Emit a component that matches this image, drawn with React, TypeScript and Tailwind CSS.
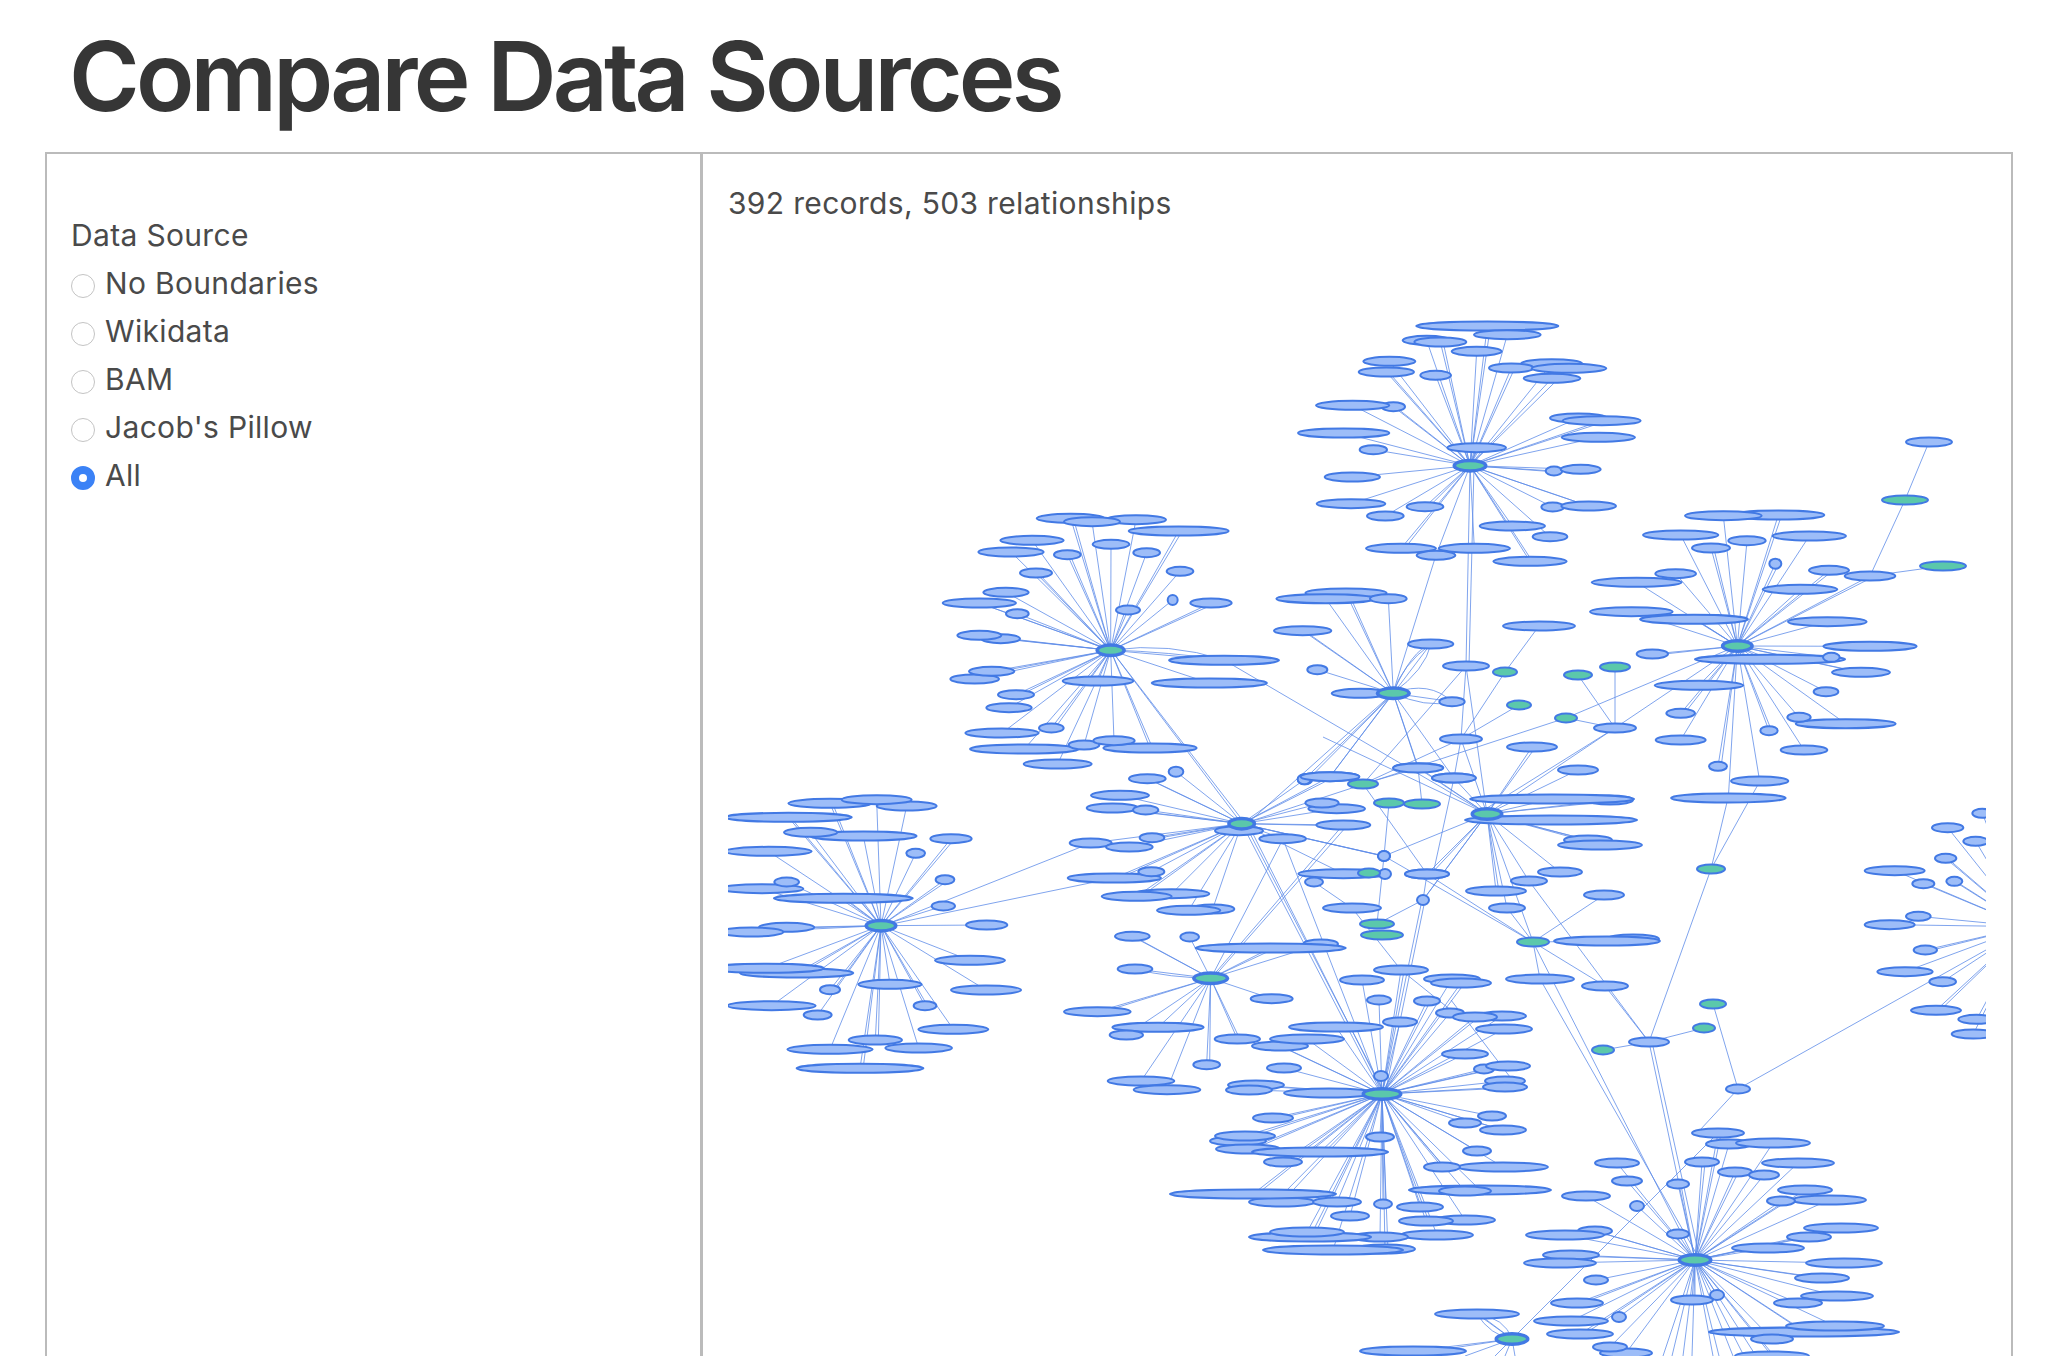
type Node = [number, number, number, number?];
type Cluster = { hub: Node; nodes: Node[] };
type Edge = number[];

const fontClass = "font-['Inter','Noto_Sans',sans-serif]";
const options = ["No Boundaries", "Wikidata", "BAM", "Jacob's Pillow", "All"];

// coordinates read at 3x from a crop, origin is the crop's corner
function crop(ox: number, oy: number, hub: Node, nodes: Node[]): Cluster {
  const map = ([x, y, w, g]: Node): Node => [ox + x / 3, oy + y / 3, w / 3, g];
  return { hub: map(hub), nodes: nodes.map(map) };
}

const clusters: Cluster[] = [
  crop(1250, 290, [660, 527, 45, 1], [
    [712, 108, 213], [772, 134, 100], [530, 151, 72], [571, 156, 78], [680, 184, 75], [418, 214, 78],
    [409, 246, 83], [557, 256, 46], [905, 221, 92], [784, 234, 67], [957, 235, 112], [906, 265, 85],
    [430, 350, 35], [308, 346, 110], [985, 384, 85], [1055, 392, 117], [281, 429, 137], [1045, 442, 110],
    [680, 473, 88], [370, 479, 41], [307, 561, 83], [912, 543, 25], [992, 538, 60], [303, 641, 103],
    [525, 650, 55], [406, 678, 55], [908, 651, 34], [1016, 648, 82], [787, 708, 98], [900, 740, 52],
    [453, 775, 105], [673, 775, 107], [558, 796, 58], [840, 814, 110],
  ]),
  crop(930, 490, [542, 481, 38, 1], [
    [422, 85, 102], [618, 89, 90], [486, 95, 84], [746, 123, 150], [306, 151, 95], [243, 186, 98],
    [412, 194, 40], [543, 163, 55], [650, 188, 40], [318, 249, 48], [750, 244, 40], [228, 307, 68],
    [148, 339, 110], [262, 371, 34], [728, 330, 15], [843, 339, 62], [594, 360, 36], [212, 446, 58],
    [148, 436, 66], [882, 511, 165], [134, 567, 73], [185, 544, 68], [504, 573, 106], [838, 579, 173],
    [258, 614, 54], [237, 653, 68], [216, 729, 110], [364, 714, 37], [283, 777, 163], [462, 765, 46],
    [660, 774, 140], [552, 752, 62], [383, 822, 102],
  ]),
  crop(730, 780, [453, 437, 42, 1], [
    [300, 70, 125], [530, 78, 90], [440, 59, 105], [175, 112, 190], [400, 168, 160], [242, 157, 80],
    [663, 176, 62], [557, 220, 28], [115, 214, 130], [645, 299, 28], [95, 326, 125], [170, 306, 37],
    [340, 355, 208], [640, 378, 35], [770, 435, 62], [170, 442, 83], [65, 456, 95], [720, 541, 105],
    [200, 579, 170], [110, 565, 172], [768, 630, 105], [300, 629, 30], [480, 613, 95], [125, 677, 132],
    [585, 677, 34], [263, 705, 42], [670, 748, 105], [436, 780, 80], [300, 808, 128], [566, 804, 100],
    [390, 865, 190],
  ]),
  crop(1060, 760, [545, 191, 36, 1], [
    [262, 56, 55], [348, 35, 22], [180, 106, 87], [157, 144, 77], [257, 150, 38], [735, 58, 22],
    [810, 50, 88], [830, 146, 85], [786, 129, 50], [850, 195, 81], [537, 212, 72], [668, 236, 70],
    [276, 233, 37], [92, 249, 63], [208, 261, 70], [163, 354, 140], [274, 335, 39], [335, 401, 113],
    [230, 409, 105], [458, 447, 65], [386, 451, 95], [972, 288, 18], [850, 341, 135],
  ]),
  crop(1060, 760, [452, 655, 48, 1], [
    [217, 529, 52], [389, 531, 28], [782, 552, 52], [632, 564, 225], [225, 627, 52], [635, 716, 63],
    [112, 755, 100], [294, 802, 137], [199, 825, 50], [532, 837, 68], [243, 963, 100], [321, 989, 100],
    [440, 914, 40],
  ]),
  crop(1260, 570, [400, 370, 45, 1], [
    [258, 69, 122], [197, 86, 148], [385, 86, 55], [128, 182, 86], [512, 222, 68], [172, 299, 30],
    [300, 370, 85], [576, 395, 38], [475, 593, 75], [133, 628, 20], [210, 620, 88], [581, 624, 65],
  ]),
  crop(1590, 420, [442, 678, 42, 1], [
    [565, 285, 138], [400, 287, 115], [272, 345, 113], [363, 384, 57], [471, 362, 56], [658, 348, 110],
    [556, 431, 18], [257, 461, 61], [140, 487, 135], [717, 451, 60], [630, 508, 112], [124, 575, 124],
    [312, 598, 162], [712, 605, 118], [840, 679, 140], [187, 702, 47], [540, 718, 225], [724, 712, 25],
    [813, 757, 87], [327, 796, 133], [708, 815, 37], [272, 880, 43], [767, 911, 150], [627, 892, 35],
    [537, 932, 26], [272, 960, 75], [642, 990, 70], [384, 1039, 27], [509, 1083, 86], [415, 1134, 172],
    [840, 468, 76],
  ]),
  crop(1800, 780, [680, 440, 40, 1], [
    [547, 100, 30], [443, 143, 47], [527, 184, 37], [437, 235, 32], [284, 272, 90], [370, 311, 33],
    [463, 304, 24], [355, 409, 37], [269, 434, 75], [376, 510, 35], [315, 575, 83], [428, 605, 40],
    [408, 691, 75], [520, 762, 65], [530, 718, 55],
  ]),
  {
    hub: [1487, 814, 14, 1],
    nodes: [
      [1610, 800, 23], [1552, 799, 82], [1551, 820, 86], [1588, 840, 24], [1600, 845, 42], [1578, 770, 20],
      [1532, 747, 25], [1560, 872, 22], [1529, 881, 18], [1496, 891, 30], [1507, 908, 18], [1454, 778, 22],
      [1418, 768, 25], [1461, 739, 21], [1384, 856, 6], [1427, 874, 22], [1423, 900, 6],
    ],
  },
  {
    hub: [1382, 1094, 18, 1],
    nodes: [
      [1401, 970, 27], [1362, 980, 22], [1379, 1000, 12], [1427, 1001, 13], [1400, 1022, 17], [1452, 979, 28],
      [1461, 983, 30], [1450, 1013, 14], [1502, 1016, 24], [1475, 1017, 22], [1504, 1029, 28], [1465, 1054, 23],
      [1484, 1069, 10], [1508, 1066, 22], [1505, 1081, 20], [1505, 1087, 22], [1492, 1116, 14], [1465, 1123, 16],
      [1503, 1130, 23], [1477, 1151, 14], [1503, 1167, 45], [1442, 1167, 18], [1480, 1190, 71], [1465, 1191, 26],
      [1383, 1204, 9], [1465, 1220, 30], [1420, 1207, 23], [1426, 1221, 27], [1437, 1235, 36], [1380, 1237, 28],
      [1385, 1249, 30], [1381, 1076, 7], [1284, 1068, 17], [1280, 1046, 28], [1307, 1039, 37], [1336, 1027, 47],
      [1256, 1085, 28], [1249, 1090, 23], [1329, 1093, 45], [1273, 1118, 20], [1238, 1141, 28], [1245, 1136, 30],
      [1248, 1149, 32], [1320, 1152, 68], [1380, 1137, 14], [1283, 1162, 19], [1280, 1197, 28], [1282, 1202, 33],
      [1253, 1194, 83], [1337, 1202, 24], [1350, 1216, 19], [1310, 1237, 61], [1307, 1232, 37], [1333, 1250, 70],
    ],
  },
  {
    hub: [1695, 1260, 15, 1],
    nodes: [
      [1718, 1133, 26], [1729, 1144, 23], [1773, 1143, 37], [1702, 1162, 17], [1617, 1163, 22], [1798, 1163, 36],
      [1735, 1172, 17], [1764, 1175, 15], [1627, 1181, 15], [1678, 1184, 11], [1805, 1190, 27], [1829, 1200, 37],
      [1781, 1201, 14], [1586, 1196, 24], [1637, 1206, 7], [1595, 1231, 17], [1565, 1235, 39], [1678, 1234, 11],
      [1841, 1228, 37], [1809, 1237, 22], [1768, 1248, 36], [1571, 1255, 28], [1560, 1263, 36], [1844, 1263, 38],
      [1822, 1278, 27], [1596, 1280, 12], [1717, 1295, 7], [1692, 1300, 21], [1837, 1296, 36], [1798, 1303, 24],
      [1577, 1303, 26], [1619, 1317, 7], [1571, 1321, 37], [1804, 1332, 95], [1835, 1326, 49], [1772, 1339, 21],
      [1580, 1334, 33], [1626, 1353, 26], [1610, 1347, 17], [1772, 1356, 37],
    ],
  },
  {
    hub: [1512, 1339, 15, 1],
    nodes: [[1477, 1314, 42], [1413, 1351, 53]],
  },
];

const freeNodes: Node[] = [
  [1466, 666, 23], [1539, 626, 36], [1615, 728, 21], [1314, 882, 9], [1352, 908, 29], [1427, 874, 22],
  [1649, 1042, 20], [1738, 1089, 12], [1929, 442, 23], [1605, 986, 23], [1540, 979, 34], [1633, 939, 26],
  [1607, 941, 53], [1604, 895, 20], [1385, 874, 6],
  [1505, 672, 12, 1], [1519, 705, 12, 1], [1578, 675, 14, 1], [1615, 667, 15, 1], [1566, 718, 11, 1],
  [1363, 784, 15, 1], [1389, 803, 15, 1], [1422, 804, 18, 1], [1377, 924, 17, 1], [1382, 935, 21, 1],
  [1533, 942, 16, 1], [1711, 869, 14, 1], [1713, 1004, 13, 1], [1704, 1028, 11, 1], [1603, 1050, 11, 1],
  [1905, 500, 23, 1], [1943, 566, 23, 1], [1369, 873, 11, 1],
];

// x1, y1, x2, y2 and an optional control point for the curved ones
const extraEdges: Edge[] = [
  [1470, 466, 1466, 666], [1474, 466, 1469, 666], [1436, 555, 1393, 693], [1466, 666, 1461, 739], [1466, 666, 1487, 814],
  [1466, 666, 1363, 784], [1461, 739, 1505, 672], [1461, 739, 1519, 705], [1461, 739, 1454, 778], [1461, 739, 1363, 784],
  [1539, 626, 1505, 672], [1615, 728, 1578, 675], [1615, 728, 1615, 667], [1615, 728, 1566, 718], [1615, 728, 1487, 814],
  [1615, 728, 1487, 808], [1566, 718, 1242, 824], [1737, 646, 1566, 718], [1418, 768, 1422, 804], [1418, 768, 1363, 784],
  [1418, 768, 1393, 693], [1454, 778, 1433, 874], [1393, 693, 1330, 777], [1393, 693, 1240, 830], [1384, 856, 1389, 803],
  [1384, 856, 1242, 824], [1384, 856, 1377, 924], [1427, 874, 1363, 784], [1427, 874, 1423, 900], [1423, 900, 1487, 814],
  [1423, 900, 1377, 924], [1422, 900, 1382, 1094], [1425, 900, 1385, 1094], [1870, 576, 1905, 500], [1905, 500, 1929, 442],
  [1870, 576, 1943, 566], [1737, 646, 1615, 728], [1649, 1042, 1603, 1050], [1649, 1042, 1704, 1028], [1649, 1042, 1711, 869],
  [1728, 798, 1711, 869], [1760, 781, 1711, 869], [1738, 1089, 1713, 1004], [1738, 1089, 2027, 927], [1738, 1089, 1700, 1130],
  [1649, 1042, 1605, 986], [1529, 881, 1649, 1042], [1649, 1042, 1695, 1260], [1652, 1042, 1700, 1260], [1533, 942, 1695, 1260],
  [1540, 979, 1700, 1260], [1533, 942, 1540, 979], [1533, 942, 1605, 986], [1533, 942, 1607, 941], [1533, 942, 1604, 895],
  [1533, 942, 1507, 908], [1533, 942, 1487, 814], [1533, 942, 1384, 856], [1533, 942, 1427, 874], [1352, 908, 1401, 970],
  [1314, 882, 1352, 908], [1242, 824, 1382, 1094], [1245, 824, 1385, 1094], [1248, 824, 1382, 1090], [1283, 839, 1382, 1094],
  [1211, 978, 1343, 825], [1211, 978, 1283, 839], [1213, 978, 1346, 827], [1111, 650, 1242, 824], [1111, 650, 1247, 826],
  [1224, 660, 1487, 814], [1323, 737, 1487, 814], [882, 926, 1091, 843], [882, 926, 1114, 878],
  [1401, 970, 1452, 1011], [1451, 1000, 1520, 1090], [1518, 1333, 1718, 1133], [1512, 1339, 1465, 1356], [1512, 1339, 1495, 1356],
  [1512, 1339, 1505, 1356], [1512, 1339, 1515, 1356], [1512, 1339, 1400, 1356], [1695, 1260, 1663, 1356], [1695, 1260, 1672, 1356],
  [1695, 1260, 1683, 1356], [1695, 1260, 1692, 1356], [1695, 1260, 1713, 1356], [1695, 1260, 1719, 1356], [1695, 1260, 1733, 1356],
  [1695, 1260, 1744, 1356], [1695, 1260, 1756, 1356], [1393, 693, 1431, 644, 1412, 650], [1393, 693, 1431, 644, 1425, 670],
  [1393, 693, 1431, 644, 1402, 665], [1393, 693, 1452, 702, 1430, 680], [1393, 693, 1452, 702, 1425, 708],
  [1512, 1339, 1477, 1314, 1490, 1335], [1512, 1339, 1477, 1314, 1505, 1318], [1111, 650, 1224, 660, 1170, 642],
  [1111, 650, 1224, 660, 1170, 652], [1211, 978, 1135, 969, 1170, 978],
];

function GraphEllipse({ node, ring }: { node: Node; ring?: boolean }) {
  const [x, y, w, green] = node;
  return (
    <>
      {ring && <ellipse cx={x} cy={y} rx={w + 2.5} ry={7} fill="#4279e4" />}
      <ellipse
        cx={x}
        cy={y}
        rx={w}
        ry={w < 8 ? 5 : 4.5}
        fill={green ? "#5bc8ab" : "#9dbdf8"}
        stroke="#4279e4"
        strokeWidth={2}
      />
    </>
  );
}

function Graph() {
  return (
    <svg viewBox="728 236 1258 1120" className="block h-[1120px] w-[1258px] shrink-0 overflow-hidden">
      <g stroke="#5f8de8" strokeWidth={0.8} fill="none">
        {clusters.flatMap((c, i) =>
          c.nodes.flatMap((n, j) => {
            const spoke = <line key={`${i}-${j}`} x1={c.hub[0]} y1={c.hub[1]} x2={n[0]} y2={n[1]} />;
            if (j % 3 !== 0) return [spoke];
            return [spoke, <line key={`${i}-${j}-2`} x1={c.hub[0]} y1={c.hub[1]} x2={n[0] + 3} y2={n[1] + 1} />];
          }),
        )}
        {extraEdges.map((e, i) =>
          e.length > 4 ? (
            <path key={i} d={`M${e[0]} ${e[1]}Q${e[4]} ${e[5]} ${e[2]} ${e[3]}`} />
          ) : (
            <line key={i} x1={e[0]} y1={e[1]} x2={e[2]} y2={e[3]} />
          ),
        )}
      </g>
      {clusters.flatMap((c, i) => c.nodes.map((n, j) => <GraphEllipse key={`${i}-${j}`} node={n} />))}
      {freeNodes.map((n, i) => (
        <GraphEllipse key={i} node={n} />
      ))}
      {clusters.map((c, i) => (
        <GraphEllipse key={i} node={c.hub} ring />
      ))}
    </svg>
  );
}

export default function App() {
  return (
    <div className={`h-screen overflow-hidden bg-white pl-[45px] pr-[55px] text-[#4a4a4a] ${fontClass}`}>
      <h1 className="ml-[24px] mb-[28px] pt-[28px] text-8xl leading-[96px] font-semibold tracking-[-3.8px] text-[#363636]">
        Compare Data Sources
      </h1>
      <div className="flex h-[1300px] border-2 border-[#bbbbbb]">
        <div className="w-[656px] shrink-0 border-r-[3px] border-[#bbbbbb] pt-[63px] pl-[24px] text-3xl leading-9 tracking-[0.33px]">
          <div className="mb-[12px]">Data Source</div>
          <div className="flex flex-col gap-3">
            {options.map((option) => (
              <label key={option} className="flex items-start gap-[10px]">
                <input
                  type="radio"
                  name="source"
                  defaultChecked={option === "All"}
                  className="mt-[9px] h-6 w-6 shrink-0 appearance-none rounded-full border border-[#c4c4c4] bg-white checked:border-[8px] checked:border-[#3b82f6]"
                />
                {option}
              </label>
            ))}
          </div>
        </div>
        <div className="flex min-w-0 flex-1 flex-col px-[25px] pt-[31px]">
          <div className="mb-[15px] text-3xl leading-9 tracking-[0.33px]">392 records, 503 relationships</div>
          <Graph />
        </div>
      </div>
    </div>
  );
}
